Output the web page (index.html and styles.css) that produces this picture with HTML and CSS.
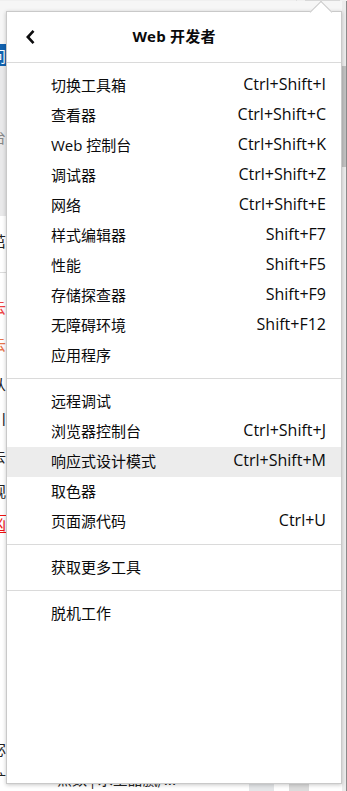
FILE: index.html
```html
<!DOCTYPE html>
<html lang="zh-CN">
<head>
<meta charset="utf-8">
<title>Web 开发者</title>
<link rel="stylesheet" href="styles.css">
</head>
<body>
<div class="page">
  <div class="topbar"><div class="tb-fill"></div><div class="tb-btn"></div><div class="tb-end"></div></div>
  <div class="main">
    <div class="content">
      <div class="band-light"></div>
      <div class="band-blue"><span class="frag white">问</span></div>
      <div class="band-gray"><span class="frag grey">台</span></div>
      <div class="frags">
        <span class="frag f1">茁</span>
        <div class="hline"></div>
        <span class="frag red f3">云</span>
        <span class="frag orange f4">云</span>
        <span class="frag f5">从</span>
        <span class="frag f6">川</span>
        <span class="frag f7">去</span>
        <span class="frag f8">观</span>
        <span class="frag boxed f9">凶</span>
        <span class="frag f10">宓</span>
        <div class="bottom-row">
          <span class="frag">扩</span>
          <span class="btext">黑数 | 水呈甜腻/...</span>
          <span class="gbox gb1"></span>
          <span class="gbox gb2"></span>
        </div>
      </div>
    </div>
    <div class="scroll"><div class="thumb"></div></div>
  </div>
</div>

<div class="panel">
  <div class="arrow"></div>
  <div class="header">
    <div class="back">
      <svg width="12" height="16" viewBox="0 0 12 16"><path d="M8.5 1.8 L2.8 8 L8.5 14.2" fill="none" stroke="#0c0c0d" stroke-width="2.6"/></svg>
    </div>
    <div class="title">Web 开发者</div>
    <div></div>
  </div>
  <div class="sep top"></div>
  <ul class="items">
    <li><span class="label">切换工具箱</span><span class="key">Ctrl+Shift+I</span></li>
    <li><span class="label">查看器</span><span class="key">Ctrl+Shift+C</span></li>
    <li><span class="label">Web 控制台</span><span class="key">Ctrl+Shift+K</span></li>
    <li><span class="label">调试器</span><span class="key">Ctrl+Shift+Z</span></li>
    <li><span class="label">网络</span><span class="key">Ctrl+Shift+E</span></li>
    <li><span class="label">样式编辑器</span><span class="key">Shift+F7</span></li>
    <li><span class="label">性能</span><span class="key">Shift+F5</span></li>
    <li><span class="label">存储探查器</span><span class="key">Shift+F9</span></li>
    <li><span class="label">无障碍环境</span><span class="key">Shift+F12</span></li>
    <li><span class="label">应用程序</span></li>
  </ul>
  <div class="sep"></div>
  <ul class="items">
    <li><span class="label">远程调试</span></li>
    <li><span class="label">浏览器控制台</span><span class="key">Ctrl+Shift+J</span></li>
    <li class="active"><span class="label">响应式设计模式</span><span class="key">Ctrl+Shift+M</span></li>
    <li><span class="label">取色器</span></li>
    <li><span class="label">页面源代码</span><span class="key">Ctrl+U</span></li>
  </ul>
  <div class="sep"></div>
  <ul class="items">
    <li><span class="label">获取更多工具</span></li>
  </ul>
  <div class="sep"></div>
  <ul class="items">
    <li><span class="label">脱机工作</span></li>
  </ul>
</div>
</body>
</html>
```

FILE: styles.css
```css
* { box-sizing: border-box; margin: 0; padding: 0; }
html, body { width: 347px; height: 791px; overflow: hidden; }
body {
  position: relative;
  background: #ffffff;
  font-family: "Open Sans", "Noto Sans CJK SC", sans-serif;
  color: #0a0a0b;
}

/* background page */
.page { display: flex; flex-direction: column; height: 791px; }
.topbar { height: 7px; display: flex; background: #f0f0f0; }
.tb-fill { flex: 1; border-right: 1px solid #e0e0e0; margin-right: 8px; }
.tb-btn { width: 35px; background: #d8d8d8; }
.tb-end { width: 7px; }
.main { flex: 1; display: flex; }
.content { flex: 1; display: flex; flex-direction: column; overflow: hidden; }
.band-light { height: 43px; background: #f6f6f6; }
.band-blue { height: 22px; background: #1161ae; padding-top: 4px; }
.band-gray { height: 150px; background: #e9e9ea; padding-top: 63px; }
.frags { display: flex; flex-direction: column; align-items: flex-start; }
.frag {
  display: block;
  margin-left: -9px;
  font-family: "Noto Sans CJK SC", sans-serif;
  font-size: 15px;
  line-height: 16px;
  height: 16px;
  color: #222;
}
.frag.white { color: #ffffff; }
.frag.grey { color: #888; }
.frag.red { color: #e44; }
.frag.orange { color: #e8744a; }
.frag.boxed { color: #e11; outline: 1px solid #e11; }
.f1 { margin-top: 17px; }
.hline { margin-top: 23px; height: 1px; width: 8px; background: #dcdcdc; }
.f3 { margin-top: 26px; }
.f4 { margin-top: 21px; }
.f5 { margin-top: 24px; }
.f6 { margin-top: 19px; }
.f7 { margin-top: 21px; }
.f8 { margin-top: 19px; }
.f9 { margin-top: 17px; }
.f10 { margin-top: 209px; }
.bottom-row { margin-top: 14px; display: flex; align-items: flex-start; height: 20px; width: 345px; }
.btext {
  margin-left: 51px;
  font-family: "Noto Sans CJK SC", sans-serif;
  font-size: 15px;
  line-height: 16px;
  color: #222;
  width: 175px;
}
.gbox { display: block; height: 20px; background: #e4e6e8; }
.gb1 { width: 25px; margin-left: 17px; }
.gb2 { width: 20px; margin-left: 15px; background: #dcdcdc; }

.scroll { width: 5px; background: #ececec; border-right: 1px solid #8a8a8a; padding-top: 65px; }
.thumb { width: 4px; height: 101px; background: #c1c1c1; }

/* popup panel */
.panel {
  position: absolute;
  left: 6px;
  top: 11px;
  width: 336px;
  height: 773px;
  background: #ffffff;
  border: 1px solid #c9c9c9;
  box-shadow: 0 1px 4px rgba(0, 0, 0, 0.22);
}
.arrow {
  position: absolute;
  left: 306px;
  top: -8px;
  width: 16px;
  height: 16px;
  background: #ffffff;
  border-top: 1px solid #c9c9c9;
  border-left: 1px solid #c9c9c9;
  transform: rotate(45deg);
}
.header {
  position: relative;
  height: 50px;
  display: grid;
  grid-template-columns: 1fr auto 1fr;
  align-items: center;
}
.back { padding-left: 18px; display: flex; align-items: center; }
.back svg { display: block; }
.title {
  font-weight: 700;
  font-size: 15px;
  letter-spacing: 0.2px;
  margin-bottom: 4px;
}
.sep { height: 1px; background: #dadada; margin: 7px 0 8px; }
.sep.top { margin: 0 0 8px; }
.items { list-style: none; }
.items li {
  height: 30px;
  display: flex;
  align-items: center;
  justify-content: space-between;
  padding: 0 15px 4px 44px;
}
.items li.active { background: #ececec; }
.label { font-size: 15px; }
.key { font-size: 16px; }
```
